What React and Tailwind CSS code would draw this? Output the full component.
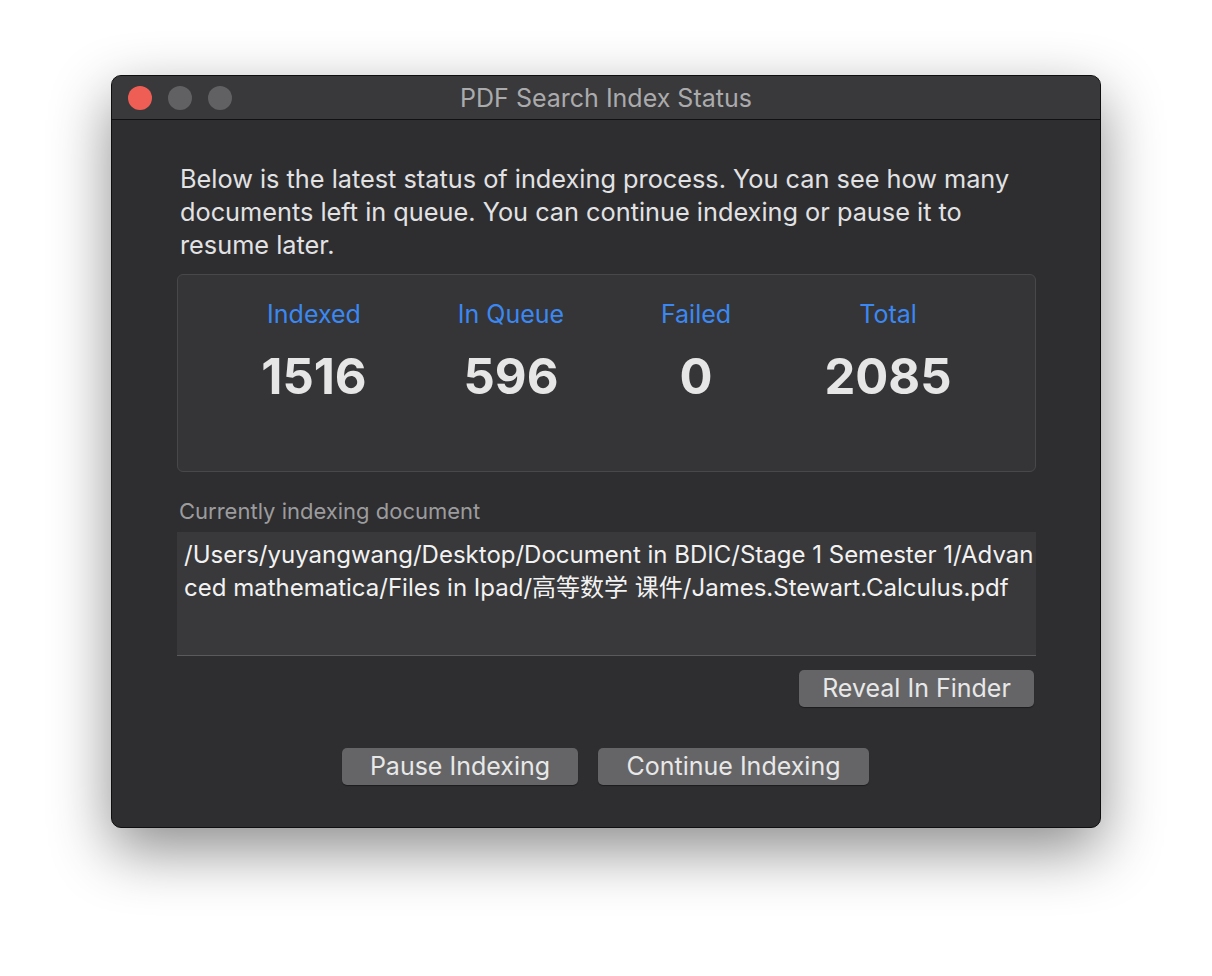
export default function App() {
  const stats = [
    { label: 'Indexed', value: '1516', w: 'w-[192px]' },
    { label: 'In Queue', value: '596', w: 'w-[202px]' },
    { label: 'Failed', value: '0', w: 'w-[168px]' },
    { label: 'Total', value: '2085', w: 'w-[216px]' },
  ];

  return (
    <div
      className="w-[1212px] h-[976px] bg-white pt-[75px] pl-[111px]"
      style={{ fontFamily: 'Inter, "Noto Sans CJK SC", sans-serif' }}
    >
      <div className="w-[990px] h-[753px] rounded-[10px] border border-[#0f0f10] bg-[#2e2e30] shadow-[0_22px_60px_rgba(0,0,0,0.45)] overflow-hidden flex flex-col">
        {/* title bar */}
        <div className="relative h-[44px] shrink-0 bg-[#39393b] border-b border-[#111] flex items-center">
          <div className="flex gap-[16px] pl-[16px]">
            <span className="w-[24px] h-[24px] rounded-full bg-[#ee5e55]" />
            <span className="w-[24px] h-[24px] rounded-full bg-[#616163]" />
            <span className="w-[24px] h-[24px] rounded-full bg-[#616163]" />
          </div>
          <div className="absolute inset-0 flex items-center justify-center pt-[2px] text-[25px] text-[#ababad]">
            PDF Search Index Status
          </div>
        </div>

        <div className="pl-[68px] pr-[64px] pt-[42px]">
          <p className="w-[845px] text-[25.3px] leading-[33px] text-[#e2e2e4]">
            Below is the latest status of indexing process. You can see how many documents left in queue. You
            can continue indexing or pause it to resume later.
          </p>

          <div className="mt-[13px] ml-[-3px] h-[198px] rounded-[6px] border border-[#48484a] bg-[#353537] flex pl-[40px] pt-[23px]">
            {stats.map((s) => (
              <div key={s.label} className={`${s.w} flex flex-col items-center`}>
                <span className="text-[25px] leading-[32px] text-[#3b88f2]">{s.label}</span>
                <span className="mt-[17px] text-[49px] leading-[60px] font-bold text-[#e6e6e6]">{s.value}</span>
              </div>
            ))}
          </div>

          <div className="mt-[26px] ml-[-1px] text-[22px] leading-[26px] text-[#9c9c9e]">Currently indexing document</div>

          {/* path field: the app wraps mid-word at the field edge */}
          <div className="mt-[8px] ml-[-3px] h-[124px] bg-[#39393b] border-b border-[#5a5a5c] pl-[7px] pt-[6px] text-[24px] leading-[33px] text-[#f2f2f2] whitespace-nowrap overflow-hidden">
            <div>/Users/yuyangwang/Desktop/Document in BDIC/Stage 1 Semester 1/Advan</div>
            <div>ced mathematica/Files in Ipad/高等数学 课件/James.Stewart.Calculus.pdf</div>
          </div>

          <div className="flex justify-end mt-[14px] mr-[2px]">
            <button className="w-[235px] h-[37px] rounded-[5px] bg-[#656567] text-[25px] text-[#e8e8e8] shadow-[0_1px_1px_rgba(0,0,0,0.4)]">
              Reveal In Finder
            </button>
          </div>

          <div className="flex gap-[20px] mt-[41px] ml-[162px]">
            <button className="w-[236px] h-[37px] rounded-[5px] bg-[#656567] text-[25px] text-[#e8e8e8] shadow-[0_1px_1px_rgba(0,0,0,0.4)]">
              Pause Indexing
            </button>
            <button className="w-[271px] h-[37px] rounded-[5px] bg-[#656567] text-[25px] text-[#e8e8e8] shadow-[0_1px_1px_rgba(0,0,0,0.4)]">
              Continue Indexing
            </button>
          </div>
        </div>
      </div>
    </div>
  );
}
